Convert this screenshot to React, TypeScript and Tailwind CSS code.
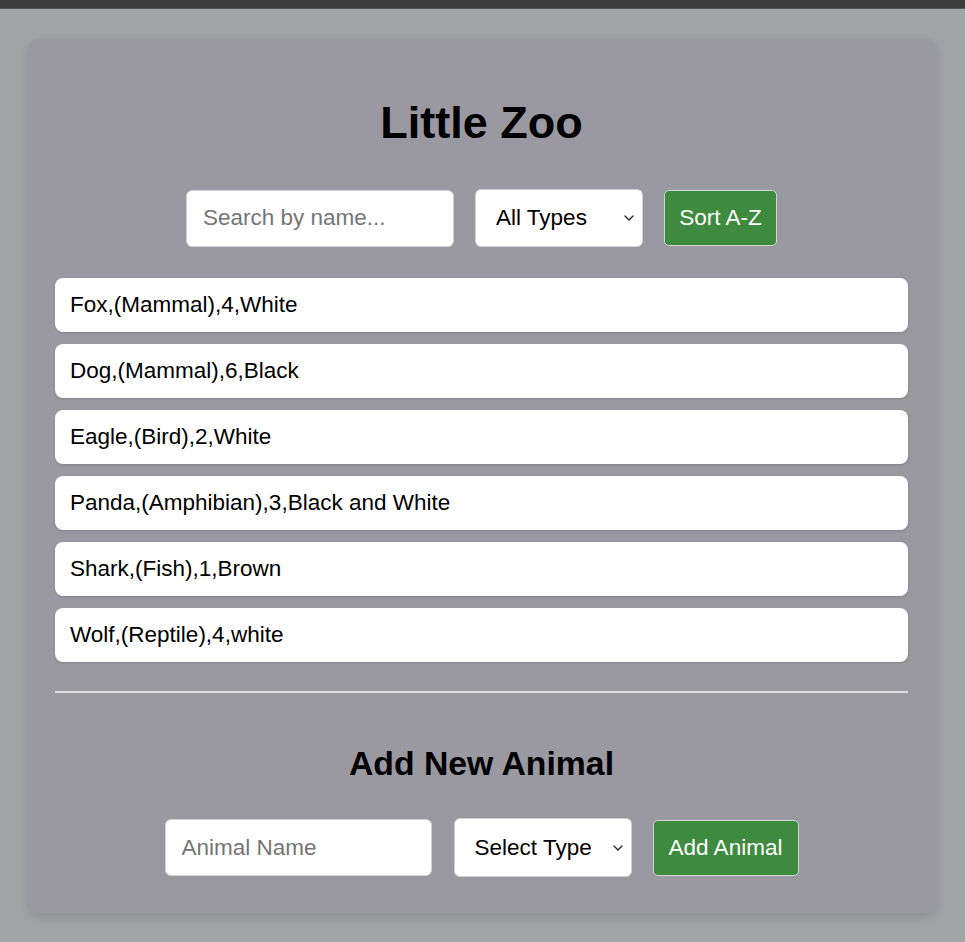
import React from "react";

const animals = [
  "Fox,(Mammal),4,White",
  "Dog,(Mammal),6,Black",
  "Eagle,(Bird),2,White",
  "Panda,(Amphibian),3,Black and White",
  "Shark,(Fish),1,Brown",
  "Wolf,(Reptile),4,white",
];

function Chevron() {
  return (
    <svg width="10" height="6" viewBox="0 0 10 6" className="pointer-events-none absolute top-1/2 -translate-y-1/2 right-[9px]">
      <path d="M1 1 L5 5 L9 1" fill="none" stroke="#222" strokeWidth="1.3" strokeLinecap="round" strokeLinejoin="round" />
    </svg>
  );
}

function SelectBox({ label, width, height }: { label: string; width: string; height: string }) {
  return (
    <div className={`relative ${width} ${height}`}>
      <select
        defaultValue=""
        className="appearance-none w-full h-full bg-white border border-[#d0d0d0] rounded-[6px] pl-[20px] pr-[30px] text-[22.5px] text-black outline-none"
      >
        <option value="">{label}</option>
      </select>
      <Chevron />
    </div>
  );
}

export default function App() {
  return (
    <div className="min-h-[942px] bg-[#a2a3a4] font-['Liberation_Sans',Arial,sans-serif]">
      <div className="h-[9px] bg-[#3b3b3b] border-b border-[#555]" />
      <div className="px-[28px] pt-[30px] pb-[29px]">
        <div className="bg-[#9a98a1] rounded-[11px] shadow-[0_4px_10px_rgba(0,0,0,0.12)] pl-[27px] pr-[29px] pt-[27px] pb-[36px]">
          <h1 className="mt-[31px] text-center font-bold text-[45px] leading-[52px] text-black">Little Zoo</h1>

          <div className="mt-[40px] flex items-center justify-center gap-[21px]">
            <input
              placeholder="Search by name..."
              className="w-[268px] h-[57px] bg-white border border-[#d0d0d0] rounded-[6px] px-[16px] text-[22.5px] text-black placeholder:text-[#757575] outline-none"
            />
            <SelectBox label="All Types" width="w-[168px]" height="h-[58px]" />
            <button className="w-[113px] h-[56px] bg-[#3e8a3e] text-white text-[22.5px] border border-[#cfd8cf] rounded-[5px]">
              Sort A-Z
            </button>
          </div>

          <div className="mt-[31px] flex flex-col gap-[12px]">
            {animals.map((a) => (
              <div
                key={a}
                className="h-[54px] bg-white rounded-[8px] shadow-[0_1px_3px_rgba(0,0,0,0.15)] flex items-center px-[15px] text-[22.5px] text-black"
              >
                {a}
              </div>
            ))}
          </div>

          <div className="mt-[29px] h-[2px] bg-[#dcdcdc]" />

          <h2 className="mt-[51px] text-center font-bold text-[33.75px] leading-[39px] text-black">Add New Animal</h2>

          <div className="mt-[35px] flex items-center justify-center">
            <input
              placeholder="Animal Name"
              className="w-[267px] h-[57px] bg-white border border-[#d0d0d0] rounded-[6px] px-[16px] text-[22.5px] text-black placeholder:text-[#757575] outline-none"
            />
            <div className="ml-[22px]">
              <SelectBox label="Select Type" width="w-[178px]" height="h-[59px]" />
            </div>
            <button className="ml-[21px] w-[146px] h-[56px] bg-[#3e8a3e] text-white text-[22.5px] border border-[#cfd8cf] rounded-[5px]">
              Add Animal
            </button>
          </div>
        </div>
      </div>
    </div>
  );
}
